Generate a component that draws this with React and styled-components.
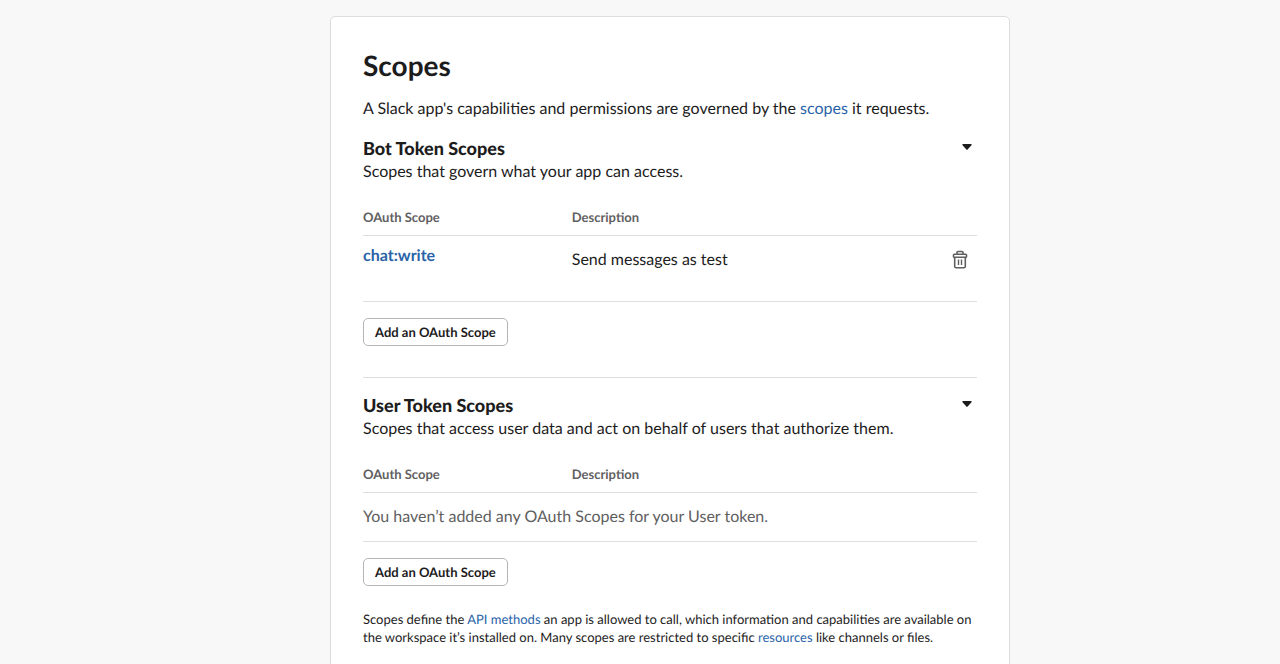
import React, { useState } from 'react';
import styled, { createGlobalStyle } from 'styled-components';

const GlobalStyle = createGlobalStyle`
  * {
    box-sizing: border-box;
  }

  body {
    margin: 0;
    background-color: #f8f8f8;
    color: #1d1c1d;
    font-family: Lato, 'Liberation Sans', sans-serif;
    font-size: 16px;
    line-height: 24px;
    text-rendering: geometricPrecision;
  }
`;

const Page = styled.main`
  display: flex;
  justify-content: center;
  padding: 16px 0 16px 60px;
`;

const Card = styled.section`
  width: 100%;
  max-width: 680px;
  padding: 28px 32px 32px;
  background-color: #ffffff;
  border: 1px solid #dddddd;
  border-radius: 5px;
`;

const Title = styled.h1`
  margin: 0 0 12px;
  font-size: 28px;
  line-height: 40px;
  font-weight: 700;
`;

const Text = styled.p`
  margin: 0;
`;

const TextLink = styled.a`
  color: #2a64a8;
  font-weight: ${(props) => (props.$bold ? 700 : 400)};
  text-decoration: none;

  &:hover {
    text-decoration: underline;
  }
`;

const Group = styled.section`
  padding-top: 15px;
  padding-bottom: ${(props) => (props.$divided ? '31px' : '0')};
  border-bottom: ${(props) => (props.$divided ? '1px solid #dddddd' : 'none')};
`;

const GroupHeader = styled.div`
  display: flex;
  justify-content: space-between;
  align-items: flex-start;
`;

const GroupTitle = styled.h2`
  margin: 0;
  font-size: 18px;
  line-height: 24px;
  font-weight: 900;
`;

const IconButton = styled.button`
  display: inline-flex;
  align-items: center;
  justify-content: center;
  width: 20px;
  height: ${(props) => props.$height || 20}px;
  padding: 0;
  background: none;
  border: none;
  color: ${(props) => props.$color || '#1d1c1d'};
  cursor: pointer;
`;

const Table = styled.table`
  width: 100%;
  margin-top: 16px;
  border-collapse: collapse;
  table-layout: fixed;
`;

const HeadCell = styled.th`
  width: ${(props) => props.$width || 'auto'};
  padding: 8px 0 9px;
  border-bottom: 1px solid #dddddd;
  color: #616061;
  font-size: 13px;
  line-height: 18px;
  font-weight: 700;
  text-align: left;
`;

const Cell = styled.td`
  padding: ${(props) => props.$padding || '12px 0'};
  border-bottom: 1px solid #dddddd;
  color: ${(props) => (props.$muted ? '#616061' : '#1d1c1d')};
  text-align: ${(props) => props.$align || 'left'};
  vertical-align: top;
`;

const AddButton = styled.button`
  display: block;
  height: 28px;
  margin-top: 16px;
  padding: 0 11px 1px;
  background-color: #ffffff;
  border: 1px solid #b5b5b5;
  border-radius: 5px;
  color: #1d1c1d;
  font-family: inherit;
  font-size: 13px;
  line-height: 18px;
  font-weight: 700;
  text-rendering: inherit;
  cursor: pointer;
`;

const Footnote = styled.p`
  margin: 24px 0 0;
  font-size: 13px;
  line-height: 18px;
`;

const CaretIcon = () => (
  <svg width="10" height="6" viewBox="0 0 10 6" aria-hidden="true">
    <path d="M1 0h8a.7.7 0 0 1 .5 1.2L5.6 5.6a.8.8 0 0 1-1.2 0L.5 1.2A.7.7 0 0 1 1 0z" fill="currentColor" />
  </svg>
);

const TrashIcon = () => (
  <svg width="20" height="20" viewBox="0 0 20 20" fill="none" stroke="currentColor" strokeWidth="1.6" strokeLinejoin="round" aria-hidden="true">
    <path d="M7 4V2.600c0-.7.4-1.100 1.100-1.100h3.800c.7 0 1.100.4 1.100 1.100V4" />
    <rect x="3.500" y="4.200" width="13" height="3.100" rx=".8" />
    <path d="M4.700 7.300v9.100c0 .8.500 1.300 1.300 1.300h8c.8 0 1.300-.5 1.300-1.300V7.300" />
    <path d="M8.500 9.500v5.500M11.500 9.500v5.500" strokeWidth="1.400" />
  </svg>
);

const ScopeGroup = ({ title, description, scopes, emptyText, divided }) => {
  const [open, setOpen] = useState(true);

  return (
    <Group $divided={divided}>
      <GroupHeader>
        <div>
          <GroupTitle>{title}</GroupTitle>
          <Text>{description}</Text>
        </div>
        <IconButton
          type="button"
          aria-label={`Toggle ${title}`}
          aria-expanded={open}
          $height={22}
          onClick={() => setOpen(!open)}
        >
          <CaretIcon />
        </IconButton>
      </GroupHeader>
      {open && (
        <>
          <Table>
            <thead>
              <tr>
                <HeadCell $width="34%">OAuth Scope</HeadCell>
                <HeadCell>Description</HeadCell>
                <HeadCell $width="36px" aria-label="Actions" />
              </tr>
            </thead>
            <tbody>
              {scopes.map((scope) => (
                <tr key={scope.name}>
                  <Cell $padding="8px 0 33px">
                    <TextLink href="#scope" $bold>{scope.name}</TextLink>
                  </Cell>
                  <Cell>{scope.description}</Cell>
                  <Cell $padding="14px 7px 0 0" $align="right">
                    <IconButton type="button" aria-label={`Delete ${scope.name}`} $color="#616061">
                      <TrashIcon />
                    </IconButton>
                  </Cell>
                </tr>
              ))}
              {scopes.length === 0 && (
                <tr>
                  <Cell colSpan={3} $muted>{emptyText}</Cell>
                </tr>
              )}
            </tbody>
          </Table>
          <AddButton type="button">Add an OAuth Scope</AddButton>
        </>
      )}
    </Group>
  );
};

const botScopes = [{ name: 'chat:write', description: 'Send messages as test' }];

const App = () => (
  <>
    <GlobalStyle />
    <Page>
      <Card>
        <Title>Scopes</Title>
        <Text>
          A Slack app's capabilities and permissions are governed by the{' '}
          <TextLink href="#scopes">scopes</TextLink> it requests.
        </Text>
        <ScopeGroup
          title="Bot Token Scopes"
          description="Scopes that govern what your app can access."
          scopes={botScopes}
          divided
        />
        <ScopeGroup
          title="User Token Scopes"
          description="Scopes that access user data and act on behalf of users that authorize them."
          scopes={[]}
          emptyText="You haven’t added any OAuth Scopes for your User token."
        />
        <Footnote>
          Scopes define the <TextLink href="#methods">API methods</TextLink> an app is allowed to call, which
          information and capabilities are available on the workspace it’s installed on. Many scopes are
          restricted to specific <TextLink href="#resources">resources</TextLink> like channels or files.
        </Footnote>
      </Card>
    </Page>
  </>
);

export default App;
